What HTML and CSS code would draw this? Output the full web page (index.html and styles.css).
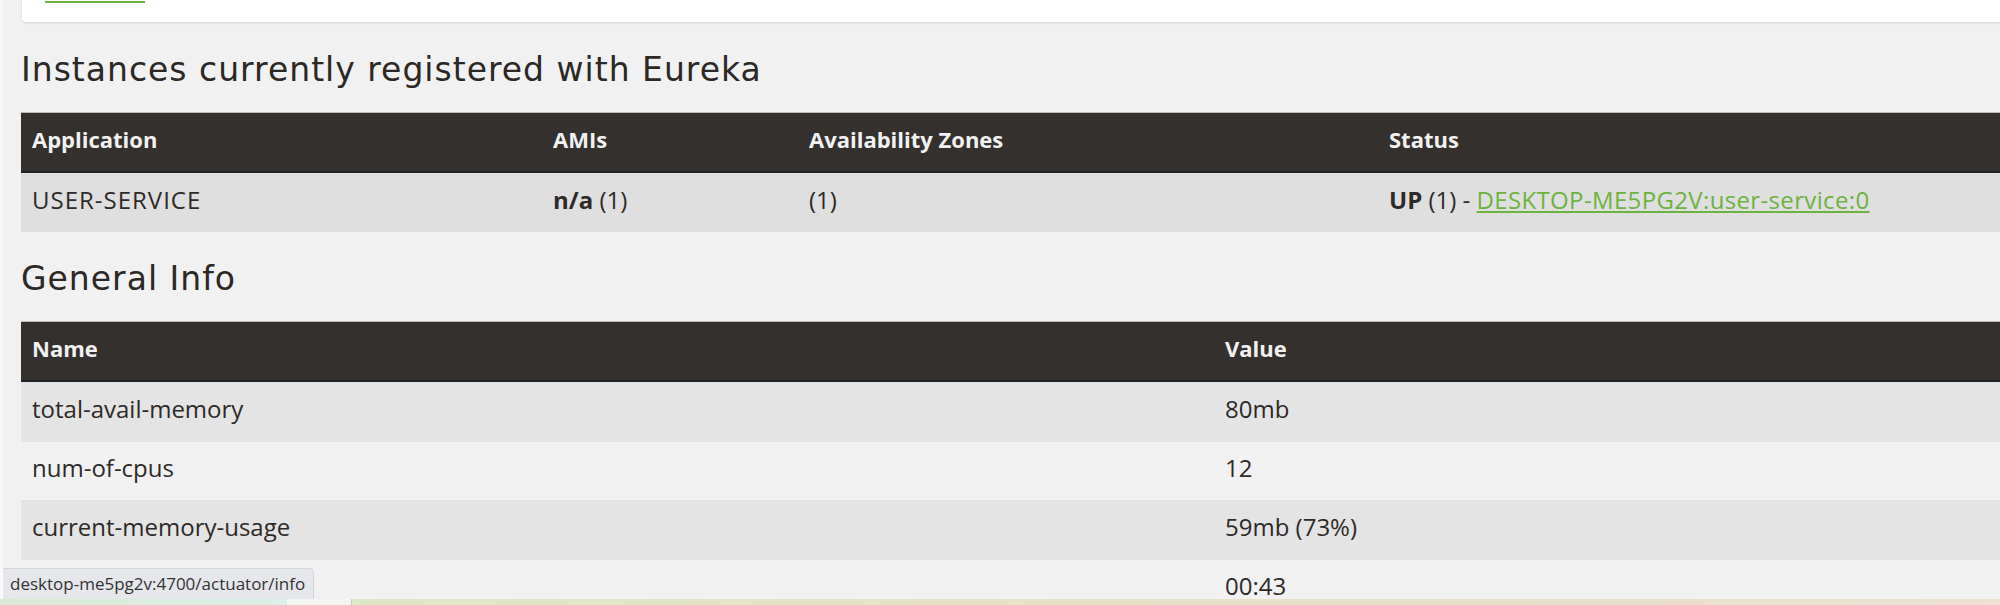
FILE: index.html
```html
<!DOCTYPE html>
<html lang="en">
<head>
<meta charset="utf-8">
<title>Eureka</title>
<link rel="stylesheet" href="styles.css">
</head>
<body>
<div class="page">
  <div class="card"><span class="card-link"></span></div>

  <h2 class="section-title">Instances currently registered with Eureka</h2>
  <table class="table table-apps">
    <colgroup>
      <col class="col-app"><col class="col-ami"><col class="col-zone"><col>
    </colgroup>
    <thead>
      <tr><th>Application</th><th>AMIs</th><th>Availability Zones</th><th>Status</th></tr>
    </thead>
    <tbody>
      <tr>
        <td class="app-name">USER-SERVICE</td>
        <td><b>n/a</b> (1)</td>
        <td>(1)</td>
        <td><b>UP</b> (1) - <a class="instance-link" href="#">DESKTOP-ME5PG2V:user-service:0</a></td>
      </tr>
    </tbody>
  </table>

  <h2 class="section-title">General Info</h2>
  <table class="table table-info">
    <colgroup>
      <col class="col-name"><col>
    </colgroup>
    <thead>
      <tr><th>Name</th><th>Value</th></tr>
    </thead>
    <tbody>
      <tr><td>total-avail-memory</td><td>80mb</td></tr>
      <tr><td>num-of-cpus</td><td>12</td></tr>
      <tr><td>current-memory-usage</td><td>59mb (73%)</td></tr>
      <tr><td></td><td>00:43</td></tr>
    </tbody>
  </table>
</div>

<div class="status-bubble">desktop-me5pg2v:4700/actuator/info</div>
<div class="desktop-edge">
  <span class="edge-a"></span><span class="edge-b"></span><span class="edge-c"></span>
</div>
</body>
</html>
```

FILE: styles.css
```css
html, body {
  margin: 0;
  padding: 0;
}

body {
  width: 2000px;
  height: 605px;
  overflow: hidden;
  box-sizing: border-box;
  background: #f1f1f1;
  border-left: 3px solid #f8f8f8;
  font-family: "Open Sans", "Noto Sans", sans-serif;
  color: #34302d;
}

.page {
  padding-left: 18px;
}

.card {
  display: flex;
  height: 22px;
  background: #ffffff;
  border-bottom: 1px solid #dedede;
  border-left: 1px solid #e6e6e6;
  border-bottom-left-radius: 5px;
  box-shadow: 0 1px 2px rgba(0, 0, 0, 0.06);
}

.card-link {
  display: block;
  width: 100px;
  height: 2px;
  margin: 1px 0 0 23px;
  background: #6db33f;
}

.section-title {
  margin: 27px 0 22px;
  font-family: "DejaVu Sans", "Open Sans", sans-serif;
  font-weight: 400;
  font-size: 33px;
  line-height: 40px;
  letter-spacing: 1px;
  color: #2b2826;
}

.table {
  width: 100%;
  border-collapse: separate;
  border-spacing: 0;
  table-layout: fixed;
}

.col-app { width: 521px; }
.col-ami { width: 256px; }
.col-zone { width: 580px; }
.col-name { width: 1193px; }

.table th {
  padding: 2px 11px 7px;
  line-height: 49px;
  text-align: left;
  font-size: 22px;
  font-weight: 700;
  color: #f1f1f1;
  background: #34302d;
  border-top: 1px solid #b9b9b9;
  border-bottom: 2px solid #202224;
  white-space: nowrap;
}

.table td {
  padding: 2px 11px 8px;
  line-height: 48px;
  font-size: 24px;
  color: #2e2a28;
  border-top: 1px solid #dfe3e8;
  white-space: nowrap;
  overflow: hidden;
}

.table td.app-name {
  letter-spacing: 1px;
}

.table-apps tbody td {
  background: #dfdfdf;
  border-top-color: #e3e3e3;
}

.table-info tbody tr:nth-child(odd) td {
  background: #e4e4e4;
}

.table td b {
  font-weight: 700;
}

.instance-link {
  color: #6db33f;
  text-decoration: underline;
  letter-spacing: 0.35px;
}

.status-bubble {
  position: fixed;
  left: 3px;
  top: 568px;
  height: 30px;
  padding: 0 8px 0 7px;
  line-height: 29px;
  font-size: 17px;
  color: #333333;
  background: #e6e7eb;
  border-top: 1px solid #d3d4d8;
  border-right: 1px solid #d3d4d8;
  border-top-right-radius: 5px;
  white-space: nowrap;
  z-index: 2;
}

.desktop-edge {
  position: fixed;
  left: 0;
  right: 0;
  bottom: 0;
  height: 6px;
  display: flex;
  z-index: 3;
}

.edge-a {
  width: 287px;
  background: linear-gradient(90deg, #d6ead3, #dcefe8);
}

.edge-b {
  width: 64px;
  background: #f2f6f3;
  border-right: 1px solid #c9cdc4;
}

.edge-c {
  flex: 1;
  background: linear-gradient(90deg, #dde8c6 0%, #e6e3c6 40%, #e9e0cb 75%, #ece1d2 100%);
}
```
